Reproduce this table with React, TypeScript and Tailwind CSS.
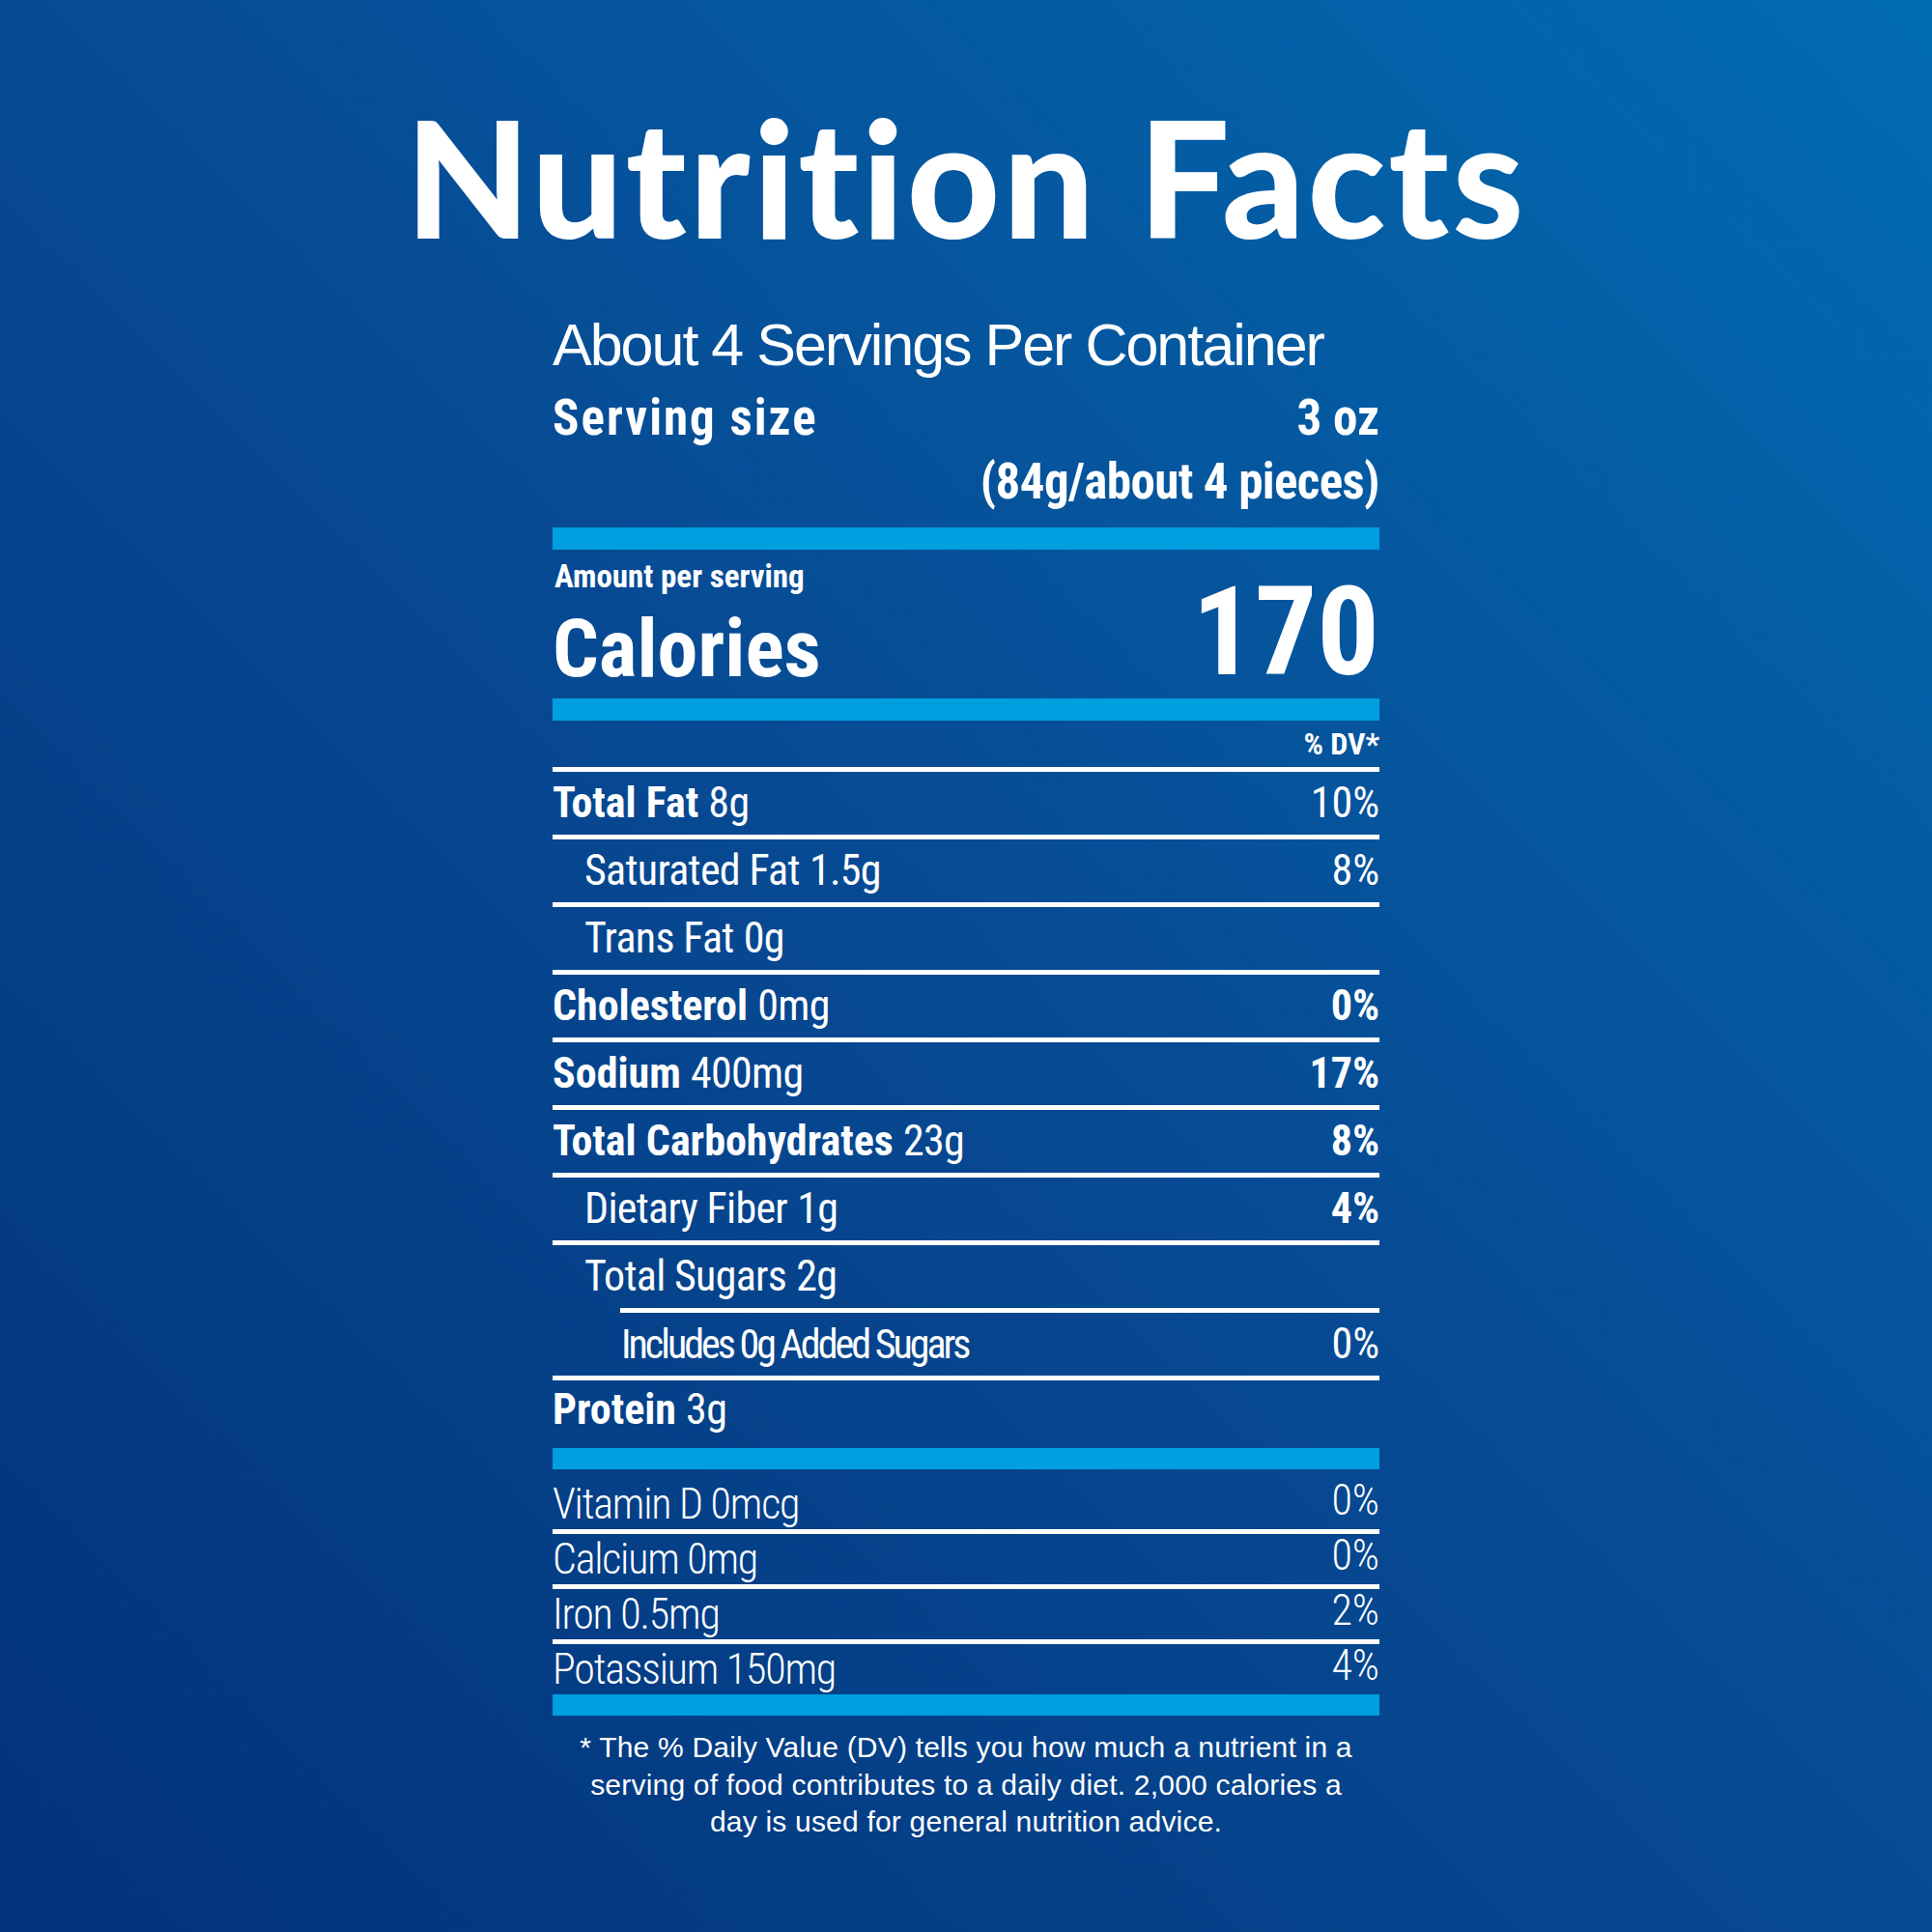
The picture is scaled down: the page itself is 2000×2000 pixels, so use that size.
const narrow = {
  fontFamily: '"Roboto Condensed", "Open Sans Condensed", "Open Sans", sans-serif',
  fontStretch: "75%",
};
const wide = { fontFamily: '"Liberation Sans", Arial, sans-serif' };
const heavy = { fontFamily: 'Lato, "Open Sans", sans-serif' };

type Row = {
  label: string;
  amount: string;
  dv?: string;
  bold?: boolean;
  dvBold?: boolean;
  indent?: 0 | 1 | 2;
  lineIndent?: boolean;
};

const rows: Row[] = [
  { label: "Total Fat", amount: "8g", dv: "10%", bold: true },
  { label: "Saturated Fat", amount: "1.5g", dv: "8%", indent: 1 },
  { label: "Trans Fat", amount: "0g", indent: 1 },
  { label: "Cholesterol", amount: "0mg", dv: "0%", bold: true, dvBold: true },
  { label: "Sodium", amount: "400mg", dv: "17%", bold: true, dvBold: true },
  { label: "Total Carbohydrates", amount: "23g", dv: "8%", bold: true, dvBold: true },
  { label: "Dietary Fiber", amount: "1g", dv: "4%", indent: 1, dvBold: true },
  { label: "Total Sugars", amount: "2g", indent: 1, lineIndent: true },
  { label: "Includes 0g Added Sugars", amount: "", dv: "0%", indent: 2 },
];

const vitamins = [
  { label: "Vitamin D 0mcg", dv: "0%" },
  { label: "Calcium 0mg", dv: "0%" },
  { label: "Iron 0.5mg", dv: "2%" },
  { label: "Potassium 150mg", dv: "4%" },
];

function NutrientRow({ row }: { row: Row }) {
  const pad = row.indent === 1 ? "pl-[33px]" : row.indent === 2 ? "pl-[71px]" : "";
  return (
    <>
      <div className={`flex h-[65px] items-start justify-between ${pad}`}>
        {row.indent === 2 ? (
          <span className="text-[42px] leading-[65px] tracking-[-3px]">{row.label}</span>
        ) : (
          <span className="text-[44px] leading-[65px]">
            {row.bold ? (
              <span className="font-bold">{row.label}</span>
            ) : (
              <span className="tracking-[-0.7px]">{row.label}</span>
            )}{" "}
            <span className="tracking-[-0.7px]">{row.amount}</span>
          </span>
        )}
        {row.dv && (
          <span className={`text-[44px] leading-[65px] ${row.dvBold ? "font-bold" : ""}`}>{row.dv}</span>
        )}
      </div>
      <div className={`h-[5px] ${row.lineIndent ? "ml-[70px]" : ""} bg-white`} />
    </>
  );
}

export default function App() {
  return (
    <div className="h-[2000px] w-[2000px] bg-gradient-to-tr from-[#03337a] via-[#074a93] to-[#016cb2] text-white">
      <h1
        style={heavy}
        className="pt-[99px] text-center text-[167px] font-black leading-[167px] tracking-[3px]"
      >
        Nutrition Facts
      </h1>

      <div style={narrow} className="mx-auto w-[856px]">
        <div style={wide} className="mt-[61px] h-[61px] text-[61px] leading-[61px] tracking-[-2px]">
          About 4 Servings Per Container
        </div>
        <div className="mt-[19px] flex h-[51px] justify-between text-[51px] font-bold leading-[51px]">
          <span className="tracking-[2px]">Serving size</span>
          <span>3 oz</span>
        </div>
        <div className="mt-[15px] h-[51px] text-right text-[51px] font-bold leading-[51px] tracking-[-0.6px]">
          (84g/about 4 pieces)
        </div>

        <div className="mt-[22px] h-[23px] bg-[#019fe0]" />

        <div className="flex h-[154px] items-start justify-between">
          <div>
            <div className="mt-[11px] pl-[2px] text-[33px] font-bold leading-[33px]">Amount per serving</div>
            <div className="mt-[17px] text-[84px] font-bold leading-[84px]">Calories</div>
          </div>
          <div className="mt-[21px] text-[128px] font-bold leading-[128px]">170</div>
        </div>

        <div className="h-[23px] bg-[#019fe0]" />

        <div className="h-[48px] text-right text-[32px] font-bold leading-[48px]">% DV*</div>
        <div className="h-[5px] bg-white" />

        {rows.map((r) => (
          <NutrientRow key={r.label} row={r} />
        ))}

        <div className="h-[70px] text-[44px] leading-[60px]">
          <span className="font-bold">Protein</span> <span className="tracking-[-0.7px]">3g</span>
        </div>

        <div className="h-[22px] bg-[#019fe0]" />

        <div className="pt-[10px]">
          {vitamins.map((v, i) => (
            <div key={v.label}>
              <div className="flex h-[52px] justify-between text-[44px] font-light leading-[52px]">
                <span className="tracking-[-1.2px]">{v.label}</span>
                <span className="-translate-y-[4px]">{v.dv}</span>
              </div>
              {i < vitamins.length - 1 && <div className="h-[5px] bg-white" />}
            </div>
          ))}
        </div>

        <div className="h-[22px] bg-[#019fe0]" />

        <p style={wide} className="mt-[14px] whitespace-nowrap text-center text-[30px] leading-[38.5px] tracking-[0.2px]">
          * The % Daily Value (DV) tells you how much a nutrient in a
          <br />
          serving of food contributes to a daily diet. 2,000 calories a
          <br />
          day is used for general nutrition advice.
        </p>
      </div>
    </div>
  );
}
